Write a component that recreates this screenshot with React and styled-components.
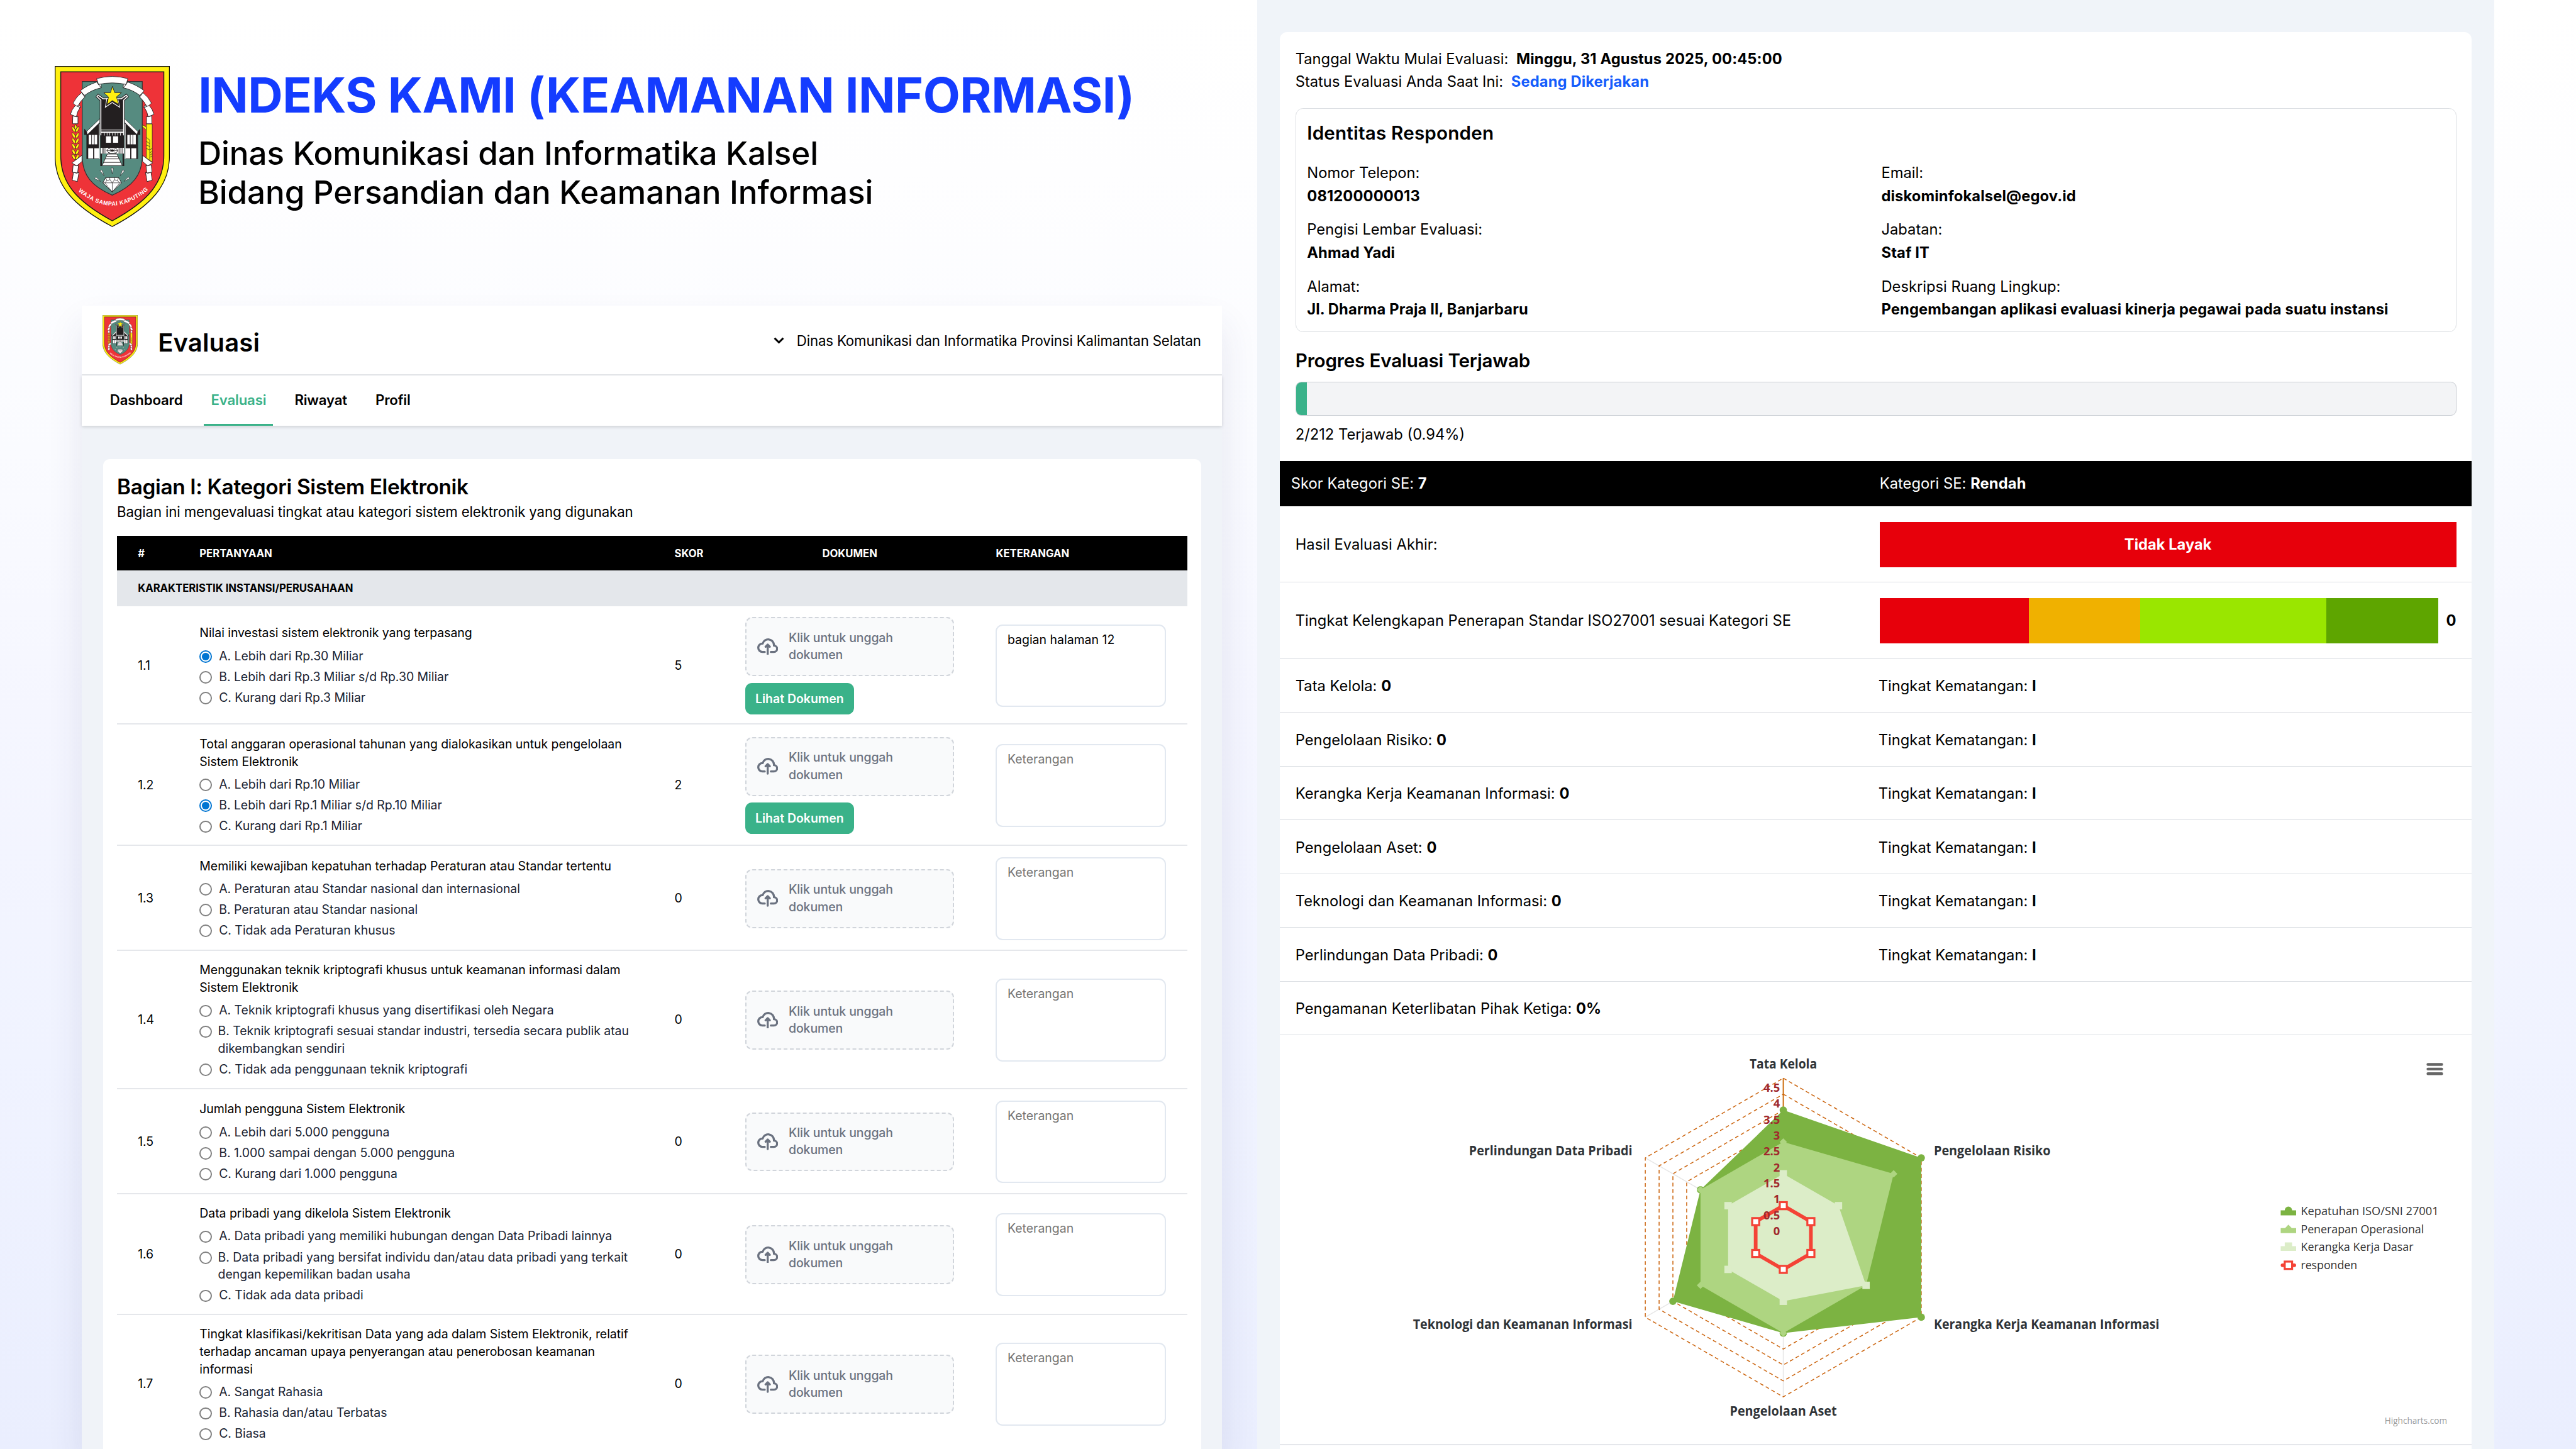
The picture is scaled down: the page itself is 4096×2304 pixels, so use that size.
import React, { useId } from 'react';
import styled, { createGlobalStyle } from 'styled-components';

const GlobalStyle = createGlobalStyle`
  html { font-size: 53.33333px; }
  *, *::before, *::after { box-sizing: border-box; }
  body {
    margin: 0;
    overflow: hidden;
    font-family: Inter, "Liberation Sans", sans-serif;
    color: #000;
  }
  h1, h2, h3, p { margin: 0; font-weight: 400; }
`;

/* ---------- board ---------- */

const Board = styled.main`
  display: grid;
  grid-template-columns: 37.48rem 36.89rem 1fr;
  width: 76.8rem;
  height: 43.2rem;
  overflow: hidden;
  background: linear-gradient(180deg, #fff 0%, #fefeff 12%, #fafbff 31%, #f5f6ff 49%, #f0f3ff 73%, #eaeefe 100%);
`;

const LeftSide = styled.section`
  display: flex;
  flex-direction: column;
  min-width: 0;
  height: 43.2rem;
`;

const Banner = styled.header`
  display: flex;
  flex: none;
  height: 9.11rem;
  padding: 1.96rem 0 0 1.64rem;
  gap: 0.84rem;
`;

const Crest = styled.svg`
  display: block;
  flex: none;
  width: ${(p) => p.$w}rem;
  height: ${(p) => p.$h}rem;
`;

const BannerTitle = styled.h1`
  margin: 0.02rem 0 0.28rem;
  font-size: 1.44rem;
  line-height: 1.74rem;
  font-weight: 700;
  letter-spacing: -0.0065em;
  color: #143cff;
  white-space: nowrap;
`;

const BannerSub = styled.p`
  font-size: 0.96rem;
  line-height: 1.16rem;
  font-weight: 500;
  letter-spacing: -0.002em;
  white-space: nowrap;
`;

/* ---------- evaluation window ---------- */

const Window = styled.div`
  display: flex;
  flex-direction: column;
  flex: 1;
  min-height: 0;
  width: 34rem;
  margin-left: 2.44rem;
  background: #f0f3f8;
  box-shadow: 0 0.6rem 1rem rgba(50, 50, 110, 0.1);
`;

const WindowHead = styled.div`
  display: flex;
  align-items: center;
  flex: none;
  height: 2.08rem;
  padding: 0 0.63rem 0 0.62rem;
  background: #fff;
  border-bottom: 0.04rem solid #e5e7eb;
`;

const WindowTitle = styled.h2`
  margin-left: 0.6rem;
  padding-top: 0.16rem;
  font-size: 0.75rem;
  line-height: 1rem;
  font-weight: 600;
  letter-spacing: 0.004em;
`;

const Agency = styled.div`
  display: flex;
  align-items: center;
  gap: 0.37rem;
  margin-left: auto;
  padding-top: 0.05rem;
  font-size: 0.417rem;
  line-height: 0.6rem;
  letter-spacing: -0.006em;
`;

const Chevron = styled.svg`
  width: 0.32rem;
  height: 0.2rem;
`;

const Tabs = styled.nav`
  display: flex;
  position: relative;
  gap: 0.43rem;
  flex: none;
  height: 1.5rem;
  padding-left: 0.63rem;
  background: #fff;
  box-shadow: 0 0.03rem 0.1rem rgba(0, 0, 0, 0.14);
`;

const Tab = styled.a`
  display: flex;
  align-items: center;
  padding: 0 0.208rem;
  font-size: 0.417rem;
  font-weight: 600;
  letter-spacing: -0.008em;
  color: ${(p) => (p.$active ? '#3ab289' : '#000')};
  border-bottom: 0.06rem solid ${(p) => (p.$active ? '#3ab289' : 'transparent')};
`;

const SectionCard = styled.div`
  flex: none;
  margin: 0.99rem 0.63rem 0;
  padding: 0.39rem 0.41rem 0 0.42rem;
  background: #fff;
  border-radius: 0.2rem 0.2rem 0 0;
`;

const SectionTitle = styled.h3`
  font-size: 0.626rem;
  line-height: 0.9rem;
  font-weight: 600;
  letter-spacing: -0.011em;
`;

const SectionNote = styled.p`
  margin: -0.03rem 0 0.415rem;
  font-size: 0.417rem;
  line-height: 0.62rem;
  letter-spacing: -0.006em;
`;

const GridLine = styled.div`
  display: grid;
  grid-template-columns: 1.84rem 14.16rem 2.11rem 7.47rem 1fr;
  align-items: center;
  padding-left: 0.62rem;
`;

const TableHead = styled(GridLine)`
  height: 1.035rem;
  padding-top: 0.01rem;
  background: #000;
  color: #fff;
  font-size: 0.313rem;
  font-weight: 700;
`;

const HeadCentered = styled.span`
  width: 6.23rem;
  text-align: center;
`;

const GroupRow = styled.div`
  display: flex;
  align-items: center;
  height: 1.06rem;
  padding: 0 0 0 0.62rem;
  background: #e4e7eb;
  font-size: 0.313rem;
  font-weight: 700;
`;

const QuestionRow = styled(GridLine)`
  height: ${(p) => p.$h}rem;
  padding-top: 0.05rem;
  border-bottom: 0.04rem solid #e5e7eb;
  font-size: 0.365rem;
  line-height: 0.52rem;
  letter-spacing: -0.002em;
`;

const QuestionText = styled.p`
  margin-bottom: 0.16rem;
  white-space: pre-line;
`;

const Option = styled.label`
  display: flex;
  gap: ${(p) => (p.$wrapped ? 0.18 : 0.21)}rem;
  margin-top: 0.1rem;
  color: #1a2433;
  white-space: pre-line;
  &:first-of-type { margin-top: 0; }
`;

const Radio = styled.input`
  appearance: none;
  flex: none;
  width: 0.37rem;
  height: 0.37rem;
  margin: 0.08rem 0 0;
  padding: 0.042rem;
  border: 0.038rem solid #808080;
  border-radius: 50%;
  background: #fff;
  &:checked {
    border-color: #0075d2;
    background: #0075d2 content-box;
  }
`;

const DocumentCell = styled.div`
  display: flex;
  flex-direction: column;
  align-items: flex-start;
  gap: 0.2rem;
`;

const DropZone = styled.div`
  display: flex;
  align-items: center;
  gap: 0.31rem;
  width: 6.23rem;
  height: 1.76rem;
  padding-left: 0.32rem;
  border: 0.045rem dashed #d1d5db;
  border-radius: 0.21rem;
  background: #f9fafb;
  color: #6b7280;
  font-weight: 500;
  letter-spacing: -0.004em;
  line-height: 0.515rem;
`;

const CloudIcon = styled.svg`
  flex: none;
  width: 0.626rem;
  height: 0.5rem;
`;

const DropText = styled.span`
  width: 3.6rem;
`;

const ViewButton = styled.button`
  width: 3.24rem;
  height: 0.94rem;
  padding: 0;
  border: 0;
  border-radius: 0.2rem;
  background: #3ab289;
  color: #fff;
  font: 600 0.365rem Inter, sans-serif;
  white-space: nowrap;
`;

const Remark = styled.textarea`
  display: block;
  width: 5.08rem;
  height: 2.47rem;
  padding: 0.17rem 0.31rem;
  border: 0.05rem solid #e2e8f0;
  border-radius: 0.21rem;
  resize: none;
  background: #fff;
  color: #000;
  font: 400 0.365rem/0.52rem Inter, sans-serif;
  &::placeholder { color: #757575; opacity: 1; }
`;

/* ---------- summary panel ---------- */

const RightSide = styled.section`
  height: 43.2rem;
  padding: 0.947rem 0.68rem 0 0.67rem;
  background: #f0f4f9;
`;

const Summary = styled.div`
  height: 43rem;
  background: #fff;
  border-radius: 0.22rem 0.22rem 0 0;
  font-size: 0.445rem;
  line-height: 0.68rem;
`;

const SummaryTop = styled.div`
  padding: 0.47rem 0.46rem 0.445rem 0.47rem;
`;

const StatusLine = styled.p`
  display: flex;
  gap: 0.24rem;
`;

const Strong = styled.strong`
  font-weight: 700;
  letter-spacing: 0.005em;
  color: ${(p) => p.$color || 'inherit'};
`;

const Identity = styled.div`
  margin-top: 0.443rem;
  height: 6.68rem;
  padding: 0.35rem 0.33rem 0;
  border: 0.03rem solid #dcdfe3;
  border-radius: 0.22rem;
`;

const SubTitle = styled.h3`
  font-size: 0.556rem;
  line-height: 0.78rem;
  font-weight: 600;
  letter-spacing: ${(p) => p.$track || 0}em;
`;

const Fields = styled.div`
  display: grid;
  grid-template-columns: 1fr 1fr;
  gap: 0.332rem;
  margin-top: 0.455rem;
`;

const ProgressTitle = styled(SubTitle)`
  margin-top: 0.46rem;
`;

const Track = styled.div`
  height: 1.01rem;
  margin: 0.24rem 0 0.225rem;
  border: 0.03rem solid #c8ccd2;
  border-radius: 0.17rem;
  background: #f3f4f6;
  overflow: hidden;
`;

const Fill = styled.div`
  height: 100%;
  background: #3ab28a;
`;

const ResultRow = styled.div`
  display: grid;
  grid-template-columns: 17.89rem 1fr;
  align-items: center;
  height: ${(p) => p.$h || 1.602}rem;
  padding: ${(p) => (p.$h ? 0.03 : 0.05)}rem 0.46rem 0 0;
  border-bottom: 0.03rem solid #dadde2;
`;

const ScoreRow = styled(ResultRow)`
  background: #000;
  color: #fff;
  border: 0;
`;

const Cell = styled.div`
  padding-left: ${(p) => p.$pad || 0}rem;
  margin-left: ${(p) => p.$pull || 0}rem;
  letter-spacing: 0.001em;
`;

const Verdict = styled.div`
  display: flex;
  align-items: center;
  justify-content: center;
  height: 1.36rem;
  background: #e7000b;
  color: #fff;
  font-weight: 700;
`;

const Gauge = styled.div`
  display: grid;
  grid-template-columns: 4.44rem 3.33rem 5.55rem 3.34rem 1fr;
  align-items: center;
  height: 1.35rem;
`;

const Segment = styled.div`
  height: 100%;
  background: ${(p) => p.$color};
`;

const GaugeValue = styled(Strong)`
  text-align: right;
`;

const ChartArea = styled.div`
  height: 12.22rem;
  border-bottom: 0.04rem solid #e5e7eb;
`;

const ChartSvg = styled.svg`
  display: block;
  width: 35.54rem;
  height: 12.2rem;
  font-family: "Open Sans", "Noto Sans", sans-serif;
`;

/* ---------- drawings ---------- */

const INK = '#231f20';

const Ribbon = () => (
  <g fill="#fff" stroke={INK} strokeWidth="5" strokeLinejoin="round">
    <path d="M525 264L548 258L550 295L528 278Z" />
    <path d="M362 318Q430 268 510 243L522 262L549 293Q462 312 400 360Z" />
    <path d="M384 352L404 358L402 373L390 368Z" />
    <path d="M374 335L402 373Q355 415 337 462L297 426Q325 370 374 335Z" />
    <path d="M343 442L359 448L366 464L334 460Z" />
    <path d="M317 446L361 463Q333 500 327 544L274 523Q285 480 317 446Z" />
    <path d="M295 536L326 544L341 540V604H293Z" />
    <path d="M377 877V930L330 968L286 943Z" />
    <path d="M298 960L330 968L346 964L338 1030L292 1024Z" />
    <path d="M301 1024L330 1032L350 1024L336 1104L290 1092Z" />
  </g>
);

const Wing = () => (
  <g>
    <path d="M397 646L424 674L534 590V908H417V700H397Z" fill={INK} />
    <path d="M418 672L538 560V592L426 698Z" fill="#fff" stroke={INK} strokeWidth="4" />
    <path d="M529 606H536V908H529Z" fill="#fff" />
    <path d="M437 700H461V782H437ZM466 700H484V782H466ZM490 700H513V782H490ZM433 816H477V904H433ZM487 816H530V904H487Z" fill="#fff" />
  </g>
);

const Ray = ({ d }) => <path d={d} fill="#fff" stroke={INK} strokeWidth="3.5" />;

const TOWER = 'M546 704V400L512 370L522 357L566 388H730L774 357L784 370L750 400V704';

function ProvinceCrest({ w, h }) {
  const arc = useId();
  return (
    <Crest $w={w} $h={h} viewBox="133 105 1030 1392" preserveAspectRatio="none">
      <path d="M137 108H1160V890C1160 1130 1006 1310 648 1493C290 1310 137 1130 137 890Z" fill="#fff010" stroke="#111" strokeWidth="7" />
      <path d="M187 155H1110V880C1110 1110 976 1270 648 1443C320 1270 187 1110 187 880Z" fill="#ee3338" stroke="#1a1a1a" strokeWidth="8" />
      <path d="M379 239H917V880C917 1050 830 1145 648 1222C466 1145 379 1050 379 880Z" fill="#568b80" stroke="#3a2f31" strokeWidth="7" />
      <g fill="#fff010" stroke={INK} strokeWidth="4">
        {[676, 728, 774, 822, 870, 914].map((y) => (
          <g key={y}>
            <path d={`M319 ${y}C298 ${y - 2} 286 ${y - 22} 288 ${y - 48}C306 ${y - 42} 319 ${y - 28} 319 ${y}Z`} />
            <path d={`M320 ${y}C341 ${y - 2} 352 ${y - 22} 350 ${y - 48}C333 ${y - 42} 320 ${y - 28} 320 ${y}Z`} />
          </g>
        ))}
        <path d="M320 608C304 630 306 640 320 654C334 640 336 630 320 608Z" />
        <path d="M918 612L953 632V660L918 630Z" />
        <path d="M953 605H1006V935L953 900Z" />
        <path d="M953 722L984 745V920M953 756L984 776M953 788L984 800M953 818L984 830L1006 816M984 856L1006 842M984 876L1006 862M984 896L1006 882" fill="none" />
      </g>
      <Ribbon />
      <g transform="translate(1296 0) scale(-1 1)"><Ribbon /></g>
      <path d="M508 214Q648 176 788 214L773 264Q648 238 525 264Z" fill="#fff" stroke={INK} strokeWidth="5" />
      <Wing />
      <g transform="translate(1296 0) scale(-1 1)"><Wing /></g>
      <path d="M541 680H755V970H739V862H557V970H541Z" fill={INK} />
      <path d={TOWER} fill={INK} stroke={INK} strokeWidth="20" />
      <path d={TOWER} fill={INK} stroke="#fff" strokeWidth="9" />
      <path d="M546 655H750V661H546ZM546 672H750V683H546Z" fill="#fff" />
      <path d="M578 683V706M602 683V706M626 683V706M650 683V706M674 683V706M698 683V706M722 683V706" stroke="#fff" strokeWidth="5" />
      <path d="M600 385H697L714 461L648 420L586 461Z" fill={INK} stroke="#fff" strokeWidth="6" />
      <path d="M650 280L670 335H731L686 372L708 438L648 404L603 438L614 372L572 335H632Z" fill="#fff010" stroke={INK} strokeWidth="5" />
      <path d="M592 712H637V769H592ZM655 712H701V769H655ZM544 812H753V862H544Z" fill="#fff" />
      <path d="M561 810V862M568 810V862M578 810V862M590 810V862M708 810V862M718 810V862M728 810V862M740 810V862" stroke={INK} strokeWidth="4" />
      <path d="M620 812H680L698 836L680 860H620L600 836Z" fill="#fff" stroke={INK} strokeWidth="5" />
      <path d="M600 836H698M620 812L634 830M680 812L664 830M620 860L634 842M680 860L664 842" stroke={INK} strokeWidth="4" />
      <ellipse cx="648" cy="835" rx="15" ry="10" fill={INK} />
      <path d="M557 866H739V962H557Z" fill="#568b80" />
      <path d="M604 866H690L738 965H558Z" fill="#fff" stroke={INK} strokeWidth="5" />
      <path d="M597 886H698M586 908H710M572 938H726" stroke={INK} strokeWidth="5" />
      <Ray d="M638 987H658L648 1038Z" />
      <Ray d="M538 1010L556 1004L575 1054Z" />
      <Ray d="M758 1010L740 1004L720 1054Z" />
      <Ray d="M490 1078L502 1064L543 1102Z" />
      <Ray d="M803 1078L793 1064L752 1102Z" />
      <path d="M590 1069H705L731 1115L648 1194L564 1115Z" fill="#fff" stroke={INK} strokeWidth="5" />
      <path d="M564 1115H731M590 1069L600 1096L628 1088L625 1069M628 1088L648 1115L668 1088L670 1069M668 1088L694 1096L705 1069M600 1096L582 1115L648 1194L716 1115L694 1096M648 1115V1194" fill="none" stroke={INK} strokeWidth="4" />
      <path id={arc} d="M345 1187Q650 1440 968 1178" fill="none" />
      <text fill="#fff" fontFamily="'Liberation Sans', sans-serif" fontWeight="700" fontSize="50">
        <textPath href={`#${arc}`} textLength="690">WAJA SAMPAI KAPUTING</textPath>
      </text>
    </Crest>
  );
}

const CloudUpload = () => (
  <CloudIcon viewBox="0 0 20 16" fill="none" stroke="currentColor" strokeWidth="2" strokeLinecap="round" strokeLinejoin="round">
    <path d="M13 13h3a3 3 0 0 0 0-6h-.025A5.56 5.56 0 0 0 16 6.5 5.5 5.5 0 0 0 5.207 5.021C5.137 5.017 5.071 5 5 5a4 4 0 0 0 0 8h2.167M10 15V6m0 0L8 8m2-2 2 2" />
  </CloudIcon>
);

/* ---------- data ---------- */

const questions = [
  { no: '1.1', h: 3.54, score: 5, file: true, remark: 'bagian halaman 12', picked: 0, text: 'Nilai investasi sistem elektronik yang terpasang',
    options: ['A. Lebih dari Rp.30 Miliar', 'B. Lebih dari Rp.3 Miliar s/d Rp.30 Miliar', 'C. Kurang dari Rp.3 Miliar'] },
  { no: '1.2', h: 3.61, score: 2, file: true, picked: 1, text: 'Total anggaran operasional tahunan yang dialokasikan untuk pengelolaan\nSistem Elektronik',
    options: ['A. Lebih dari Rp.10 Miliar', 'B. Lebih dari Rp.1 Miliar s/d Rp.10 Miliar', 'C. Kurang dari Rp.1 Miliar'] },
  { no: '1.3', h: 3.13, score: 0, text: 'Memiliki kewajiban kepatuhan terhadap Peraturan atau Standar tertentu',
    options: ['A. Peraturan atau Standar nasional dan internasional', 'B. Peraturan atau Standar nasional', 'C. Tidak ada Peraturan khusus'] },
  { no: '1.4', h: 4.12, score: 0, text: 'Menggunakan teknik kriptografi khusus untuk keamanan informasi dalam\nSistem Elektronik',
    options: ['A. Teknik kriptografi khusus yang disertifikasi oleh Negara', 'B. Teknik kriptografi sesuai standar industri, tersedia secara publik atau\ndikembangkan sendiri', 'C. Tidak ada penggunaan teknik kriptografi'] },
  { no: '1.5', h: 3.13, score: 0, text: 'Jumlah pengguna Sistem Elektronik',
    options: ['A. Lebih dari 5.000 pengguna', 'B. 1.000 sampai dengan 5.000 pengguna', 'C. Kurang dari 1.000 pengguna'] },
  { no: '1.6', h: 3.61, score: 0, text: 'Data pribadi yang dikelola Sistem Elektronik',
    options: ['A. Data pribadi yang memiliki hubungan dengan Data Pribadi lainnya', 'B. Data pribadi yang bersifat individu dan/atau data pribadi yang terkait\ndengan kepemilikan badan usaha', 'C. Tidak ada data pribadi'] },
  { no: '1.7', h: 4.12, score: 0, text: 'Tingkat klasifikasi/kekritisan Data yang ada dalam Sistem Elektronik, relatif\nterhadap ancaman upaya penyerangan atau penerobosan keamanan\ninformasi',
    options: ['A. Sangat Rahasia', 'B. Rahasia dan/atau Terbatas', 'C. Biasa'] },
];

const identity = [
  ['Nomor Telepon:', '081200000013'],
  ['Email:', 'diskominfokalsel@egov.id'],
  ['Pengisi Lembar Evaluasi:', 'Ahmad Yadi'],
  ['Jabatan:', 'Staf IT'],
  ['Alamat:', 'Jl. Dharma Praja II, Banjarbaru'],
  ['Deskripsi Ruang Lingkup:', 'Pengembangan aplikasi evaluasi kinerja pegawai pada suatu instansi'],
];

const maturity = ['Tata Kelola', 'Pengelolaan Risiko', 'Kerangka Kerja Keamanan Informasi', 'Pengelolaan Aset', 'Teknologi dan Keamanan Informasi', 'Perlindungan Data Pribadi'];

const gaugeColors = ['#e7000b', '#f0b100', '#9ae600', '#5ea500'];

/* ---------- radar chart ---------- */

const CX = 5316;
const CY = 3689.3;
const UNIT = 95;

const spot = (axis, value) => {
  const a = (axis * Math.PI) / 3;
  return [CX + Math.sin(a) * value * UNIT, CY - Math.cos(a) * value * UNIT];
};
const ring = (values) => values.map((v, i) => spot(i, v).map((n) => n.toFixed(1)).join(',')).join(' ');

const markers = {
  circle: ([x, y], c) => <circle cx={x} cy={y} r="11" fill={c} />,
  diamond: ([x, y], c) => <path d={`M${x} ${y - 11}l11 11l-11 11l-11-11z`} fill={c} />,
  square: ([x, y], c) => <rect x={x - 11} y={y - 11} width="22" height="22" fill={c} />,
};

const series = [
  { color: '#7cb342', values: [4, 5, 5, 3, 4, 3], marker: 'circle' },
  { color: '#aed581', values: [3, 4, 3, 3, 3, 3], marker: 'diamond' },
  { color: '#dcedc8', values: [2, 2, 3, 2, 2, 2], marker: 'square' },
];

const axisNames = [
  { t: maturity[0], x: 5316, y: 3185, a: 'middle', w: 201 },
  { t: maturity[1], x: 5765, y: 3444, a: 'start', w: 348 },
  { t: maturity[2], x: 5765, y: 3961, a: 'start', w: 672 },
  { t: maturity[3], x: 5316, y: 4220, a: 'middle', w: 319 },
  { t: maturity[4], x: 4866, y: 3961, a: 'end', w: 654 },
  { t: maturity[5], x: 4866, y: 3444, a: 'end', w: 487 },
];

const legend = [
  { t: 'Kepatuhan ISO/SNI 27001', y: 3623, w: 411 },
  { t: 'Penerapan Operasional', y: 3677, w: 367 },
  { t: 'Kerangka Kerja Dasar', y: 3730, w: 336 },
  { t: 'responden', y: 3784, w: 168 },
];

function RadarChart() {
  return (
    <ChartSvg viewBox="3815 3086 3554 1220">
      {[0, 1, 2, 3, 4, 5].map((i) => {
        const [x, y] = spot(i, 5);
        return <line key={i} x1={CX} y1={CY} x2={x} y2={y} stroke="#e6e6e6" strokeWidth="2.8" />;
      })}
      {[0.5, 1, 1.5, 2, 2.5, 3, 3.5, 4, 4.5, 5].map((v) => (
        <polygon key={v} points={ring(Array(6).fill(v))} fill="none" stroke="#cc6611" strokeWidth="2.8" strokeDasharray="11.1 8.3" />
      ))}
      <line x1={CX} y1={CY} x2={CX} y2={CY - 475} stroke="#cc6600" strokeWidth="3.4" />
      {series.map((s) => (
        <g key={s.color}>
          <polygon points={ring(s.values)} fill={s.color} />
          {s.values.map((v, i) => <g key={i}>{markers[s.marker](spot(i, v), s.color)}</g>)}
        </g>
      ))}
      <polygon points={ring(Array(6).fill(1))} fill="none" stroke="#f44336" strokeWidth="11" strokeLinejoin="round" />
      {[0, 1, 2, 3, 4, 5].map((i) => {
        const [x, y] = spot(i, 1);
        return <rect key={i} x={x - 10.5} y={y - 10.5} width="21" height="21" fill="#fff" stroke="#f44336" strokeWidth="6" />;
      })}
      <g fill="#a0282c" fontWeight="700" fontSize="34.5" textAnchor="end">
        {[0, 0.5, 1, 1.5, 2, 2.5, 3, 3.5, 4, 4.5].map((v) => (
          <text key={v} x="5306" y={3682.5 - v * UNIT}>{v}</text>
        ))}
      </g>
      <g fill="#2f3337" fontWeight="700" fontSize="39">
        {axisNames.map((n) => (
          <text key={n.t} x={n.x} y={n.y} textAnchor={n.a} textLength={n.w} lengthAdjust="spacingAndGlyphs">{n.t}</text>
        ))}
      </g>
      <g stroke="#666" strokeWidth="8.4" strokeLinecap="round">
        <path d="M7238 3173H7279M7238 3187H7279M7238 3201H7279" />
      </g>
      <path d="M6799 3608H6811A11 11 0 0 1 6833 3608H6845V3623H6799Z" fill="#7cb342" />
      <path d="M6799 3661H6812L6822 3651L6832 3661H6845V3676H6799Z" fill="#aed581" />
      <path d="M6799 3715H6811V3704H6833V3715H6845V3729H6799Z" fill="#dcedc8" />
      <path d="M6804.5 3772H6839.5" stroke="#f44336" strokeWidth="11" strokeLinecap="round" />
      <rect x="6811" y="3761" width="22" height="22" fill="#fff" stroke="#f44336" strokeWidth="6" />
      <g fill="#333" fontSize="34.5">
        {legend.map((l) => (
          <text key={l.t} x="6859" y={l.y} textLength={l.w} lengthAdjust="spacingAndGlyphs">{l.t}</text>
        ))}
      </g>
      <text x="7295" y="4245.5" fill="#999" fontSize="27" textAnchor="end" textLength="186" lengthAdjust="spacingAndGlyphs">Highcharts.com</text>
    </ChartSvg>
  );
}

/* ---------- page ---------- */

function Question({ q }) {
  return (
    <QuestionRow $h={q.h}>
      <span>{q.no}</span>
      <div>
        <QuestionText>{q.text}</QuestionText>
        {q.options.map((o, i) => (
          <Option key={o} $wrapped={o.includes('\n')}>
            <Radio type="radio" name={q.no} defaultChecked={q.picked === i} />
            <span>{o}</span>
          </Option>
        ))}
      </div>
      <span>{q.score}</span>
      <DocumentCell>
        <DropZone>
          <CloudUpload />
          <DropText>Klik untuk unggah dokumen</DropText>
        </DropZone>
        {q.file && <ViewButton type="button">Lihat Dokumen</ViewButton>}
      </DocumentCell>
      <Remark placeholder="Keterangan" defaultValue={q.remark} />
    </QuestionRow>
  );
}

export default function App() {
  return (
    <>
      <GlobalStyle />
      <Board>
        <LeftSide>
          <Banner>
            <ProvinceCrest w={3.43} h={4.8} />
            <div>
              <BannerTitle>INDEKS KAMI (KEAMANAN INFORMASI)</BannerTitle>
              <BannerSub>Dinas Komunikasi dan Informatika Kalsel</BannerSub>
              <BannerSub>Bidang Persandian dan Keamanan Informasi</BannerSub>
            </div>
          </Banner>
          <Window>
            <WindowHead>
              <ProvinceCrest w={1.05} h={1.47} />
              <WindowTitle>Evaluasi</WindowTitle>
              <Agency>
                <Chevron viewBox="0 0 32 20" fill="none" stroke="#000" strokeWidth="5.5">
                  <path d="M3 3L16 16L29 3" />
                </Chevron>
                Dinas Komunikasi dan Informatika Provinsi Kalimantan Selatan
              </Agency>
            </WindowHead>
            <Tabs>
              <Tab>Dashboard</Tab>
              <Tab $active>Evaluasi</Tab>
              <Tab>Riwayat</Tab>
              <Tab>Profil</Tab>
            </Tabs>
            <SectionCard>
              <SectionTitle>Bagian I: Kategori Sistem Elektronik</SectionTitle>
              <SectionNote>Bagian ini mengevaluasi tingkat atau kategori sistem elektronik yang digunakan</SectionNote>
              <TableHead>
                <span>#</span>
                <span>PERTANYAAN</span>
                <span>SKOR</span>
                <HeadCentered>DOKUMEN</HeadCentered>
                <span>KETERANGAN</span>
              </TableHead>
              <GroupRow>KARAKTERISTIK INSTANSI/PERUSAHAAN</GroupRow>
              {questions.map((q) => <Question key={q.no} q={q} />)}
            </SectionCard>
          </Window>
        </LeftSide>

        <RightSide>
          <Summary>
            <SummaryTop>
              <StatusLine>Tanggal Waktu Mulai Evaluasi: <Strong>Minggu, 31 Agustus 2025, 00:45:00</Strong></StatusLine>
              <StatusLine>Status Evaluasi Anda Saat Ini: <Strong $color="#155dfc">Sedang Dikerjakan</Strong></StatusLine>
              <Identity>
                <SubTitle $track={0.006}>Identitas Responden</SubTitle>
                <Fields>
                  {identity.map(([label, value]) => (
                    <div key={label}>
                      <p>{label}</p>
                      <p><Strong>{value}</Strong></p>
                    </div>
                  ))}
                </Fields>
              </Identity>
              <ProgressTitle $track={-0.006}>Progres Evaluasi Terjawab</ProgressTitle>
              <Track><Fill style={{ width: `${(2 / 212) * 100}%` }} /></Track>
              <p>2/212 Terjawab (0.94%)</p>
            </SummaryTop>
            <ScoreRow $h={1.35}>
              <Cell $pad={0.34}>Skor Kategori SE: <Strong>7</Strong></Cell>
              <Cell>Kategori SE: <Strong>Rendah</Strong></Cell>
            </ScoreRow>
            <ResultRow $h={2.28}>
              <Cell $pad={0.47}>Hasil Evaluasi Akhir:</Cell>
              <Verdict>Tidak Layak</Verdict>
            </ResultRow>
            <ResultRow $h={2.28}>
              <Cell $pad={0.47}>Tingkat Kelengkapan Penerapan Standar ISO27001 sesuai Kategori SE</Cell>
              <Gauge>
                {gaugeColors.map((c) => <Segment key={c} $color={c} />)}
                <GaugeValue>0</GaugeValue>
              </Gauge>
            </ResultRow>
            {maturity.map((area) => (
              <ResultRow key={area}>
                <Cell $pad={0.47}>{area}: <Strong>0</Strong></Cell>
                <Cell $pull={-0.04}>Tingkat Kematangan: <Strong>I</Strong></Cell>
              </ResultRow>
            ))}
            <ResultRow>
              <Cell $pad={0.47}>Pengamanan Keterlibatan Pihak Ketiga: <Strong>0%</Strong></Cell>
            </ResultRow>
            <ChartArea><RadarChart /></ChartArea>
          </Summary>
        </RightSide>
      </Board>
    </>
  );
}
